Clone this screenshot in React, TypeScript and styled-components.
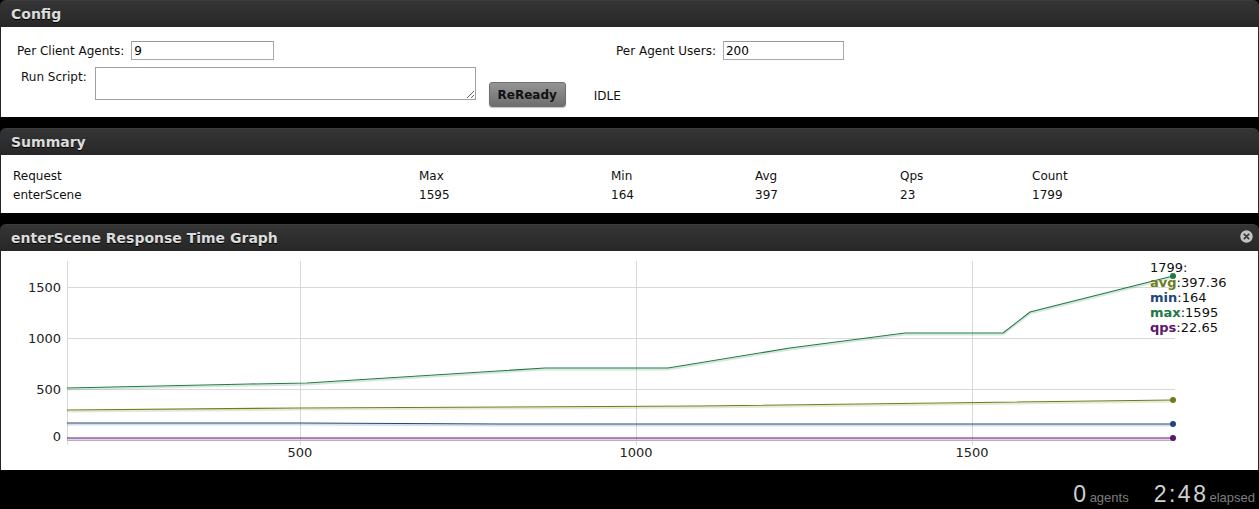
import React from "react";
import styled, { createGlobalStyle } from "styled-components";

const Global = createGlobalStyle`
  html, body { margin: 0; padding: 0; background: #000; }
  body { font-family: "DejaVu Sans", Verdana, sans-serif; font-size: 12px; color: #111; }
`;

const Page = styled.div`
  width: 1259px;
  height: 509px;
  display: flex;
  flex-direction: column;
  background: #000;
  overflow: hidden;
`;

const Panel = styled.section<{ $gap?: number }>`
  display: flex;
  flex-direction: column;
  margin-bottom: ${(p) => p.$gap ?? 11}px;
`;

const Header = styled.header`
  position: relative;
  height: 27px;
  display: flex;
  align-items: center;
  padding-left: 11px;
  border-radius: 6px 6px 0 0;
  background: linear-gradient(#343434, #272727);
  border-top: 1px solid #3c3c3c;
  box-sizing: border-box;
`;

const HeaderTitle = styled.h2`
  margin: 0;
  font-family: "DejaVu Sans", Verdana, sans-serif;
  font-weight: bold;
  font-size: 14px;
  color: #dcdcdc;
  text-shadow: 0 1px 0 #000;
`;

const CloseButton = styled.span`
  position: absolute;
  right: 6px;
  top: 5px;
  width: 13px;
  height: 13px;
  display: block;
`;

const Body = styled.div<{ $h: number }>`
  height: ${(p) => p.$h}px;
  background: #fff;
  border-left: 1px solid #262626;
  border-right: 1px solid #262626;
  box-sizing: border-box;
  position: relative;
`;

/* Config */
const ConfigBody = styled(Body)`
  display: flex;
  flex-direction: column;
  gap: 9px;
  padding-top: 14px;
`;

const Row = styled.div<{ $pl: number }>`
  display: flex;
  align-items: flex-start;
  padding-left: ${(p) => p.$pl}px;
`;

const Field = styled.label<{ $w?: number }>`
  display: flex;
  align-items: center;
  gap: 7px;
  width: ${(p) => (p.$w ? `${p.$w}px` : "auto")};
`;

const Label = styled.span`
  font-size: 12px;
  color: #111;
  white-space: nowrap;
`;

const TextInput = styled.input<{ $w: number }>`
  width: ${(p) => p.$w}px;
  height: 19px;
  box-sizing: border-box;
  border: 1px solid #a9a9a9;
  border-top-color: #999;
  padding: 0 2px;
  font-family: "DejaVu Sans", Verdana, sans-serif;
  font-size: 12px;
  color: #000;
  outline: none;
`;

const ScriptLabel = styled(Label)`
  margin-top: 1px;
  margin-right: 8px;
`;

const ScriptArea = styled.textarea`
  width: 381px;
  height: 33px;
  box-sizing: border-box;
  border: 1px solid #a0a0a0;
  resize: both;
  margin: -2px 0 0 0;
  font-family: "DejaVu Sans", Verdana, sans-serif;
  font-size: 12px;
  outline: none;
`;

const ReadyButton = styled.button`
  margin: 13px 0 0 13px;
  width: 77px;
  height: 25px;
  border-radius: 3px;
  border: 1px solid #6f6f6f;
  background: linear-gradient(#959595, #6e6e6e);
  box-shadow: 0 1px 1px rgba(0, 0, 0, 0.25);
  font-family: "DejaVu Sans", Verdana, sans-serif;
  font-weight: bold;
  font-size: 12px;
  color: #111;
  padding: 0;
`;

const Status = styled.span`
  margin: 20px 0 0 28px;
  font-size: 12px;
  color: #111;
`;

/* Summary */
const SummaryBody = styled(Body)`
  padding: 11px 0 0 12px;
`;

const SummaryGrid = styled.div`
  display: grid;
  grid-template-columns: 406px 192px 144px 145px 132px 1fr;
  grid-auto-rows: 19px;
  align-items: center;
`;

const Cell = styled.span`
  font-size: 12px;
  color: #111;
`;

/* Graph */
const GraphBody = styled(Body)`
  overflow: hidden;
`;

const Legend = styled.div`
  position: absolute;
  left: 1149px;
  top: 9px;
  display: flex;
  flex-direction: column;
  font-size: 13px;
  line-height: 15px;
  color: #111;
`;

const LegendKey = styled.b<{ $c: string }>`
  color: ${(p) => p.$c};
`;

/* Footer */
const Footer = styled.footer`
  flex: 1;
  display: flex;
  justify-content: flex-end;
  align-items: flex-start;
  padding: 13px 4px 0 0;
  margin-top: -11px;
  font-family: "Liberation Sans", Arial, sans-serif;
  line-height: 1;
`;

const Stat = styled.span<{ $ml?: number }>`
  margin-left: ${(p) => p.$ml ?? 0}px;
  display: flex;
  align-items: baseline;
`;

const Big = styled.span`
  font-size: 23px;
  color: #d0d0d0;
  letter-spacing: 2.5px;
`;

const Small = styled.span`
  font-size: 13px;
  color: #7d7d7d;
  margin-left: 1px;
`;

const COLORS = {
  avg: "#6e7d1a",
  min: "#22467e",
  max: "#1f7a45",
  qps: "#5b1670",
};

const maxPts: [number, number][] = [
  [67, 388], [250, 384], [307, 383], [545, 368], [668, 368], [790, 348],
  [905, 333], [1003, 333], [1030, 312], [1173, 276],
];
const avgPts: [number, number][] = [
  [67, 410], [300, 408], [700, 406], [1173, 400],
];
const minPts: [number, number][] = [
  [67, 423], [300, 423], [500, 424], [1173, 424],
];
const qpsPts: [number, number][] = [
  [67, 438], [1173, 438],
];

const pts = (a: [number, number][]) => a.map(([x, y]) => `${x},${y}`).join(" ");

const Series: React.FC<{ p: [number, number][]; c: string }> = ({ p, c }) => {
  const last = p[p.length - 1];
  return (
    <g>
      <polyline points={pts(p.map(([x, y]) => [x, y + 1.5] as [number, number]))} fill="none" stroke={c} strokeOpacity={0.18} strokeWidth={2} />
      <polyline points={pts(p)} fill="none" stroke={c} strokeWidth={1.1} />
      <circle cx={last[0]} cy={last[1]} r={3} fill={c} />
    </g>
  );
};

const Chart: React.FC = () => (
  <svg width={1257} height={219} viewBox="1 251 1257 219" style={{ display: "block" }}>
    <g stroke="#d9d9d9" strokeWidth={1}>
      {[287.5, 338.5, 389.5].map((y) => (
        <line key={y} x1={67} x2={1175} y1={y} y2={y} />
      ))}
      {[67.5, 300.5, 636.5, 972.5].map((x) => (
        <line key={x} x1={x} x2={x} y1={261} y2={445} />
      ))}
    </g>
    <line x1={67} x2={1175} y1={440.5} y2={440.5} stroke="#c9b9d0" strokeWidth={1} />
    <g fontFamily="DejaVu Sans, Verdana, sans-serif" fontSize={13} fill="#222">
      {[
        [1500, 292],
        [1000, 343],
        [500, 394],
        [0, 441],
      ].map(([v, y]) => (
        <text key={v} x={61} y={y} textAnchor="end">{v}</text>
      ))}
      {[
        [500, 300],
        [1000, 636],
        [1500, 972],
      ].map(([v, x]) => (
        <text key={v} x={x} y={457} textAnchor="middle">{v}</text>
      ))}
    </g>
    <Series p={qpsPts} c={COLORS.qps} />
    <Series p={minPts} c={COLORS.min} />
    <Series p={avgPts} c={COLORS.avg} />
    <Series p={maxPts} c={COLORS.max} />
  </svg>
);

const CloseIcon: React.FC = () => (
  <svg width={13} height={13} viewBox="0 0 13 13">
    <circle cx={6.5} cy={6.5} r={6.2} fill="#c4c4c4" />
    <path d="M4.3 4.3 L8.7 8.7 M8.7 4.3 L4.3 8.7" stroke="#3a3a3a" strokeWidth={1.8} strokeLinecap="round" />
  </svg>
);

const summary = [
  ["Request", "Max", "Min", "Avg", "Qps", "Count"],
  ["enterScene", "1595", "164", "397", "23", "1799"],
];

export default function App() {
  return (
    <Page>
      <Global />
      <Panel>
        <Header>
          <HeaderTitle>Config</HeaderTitle>
        </Header>
        <ConfigBody $h={90}>
          <Row $pl={16}>
            <Field $w={599}>
              <Label>Per Client Agents:</Label>
              <TextInput $w={143} defaultValue="9" />
            </Field>
            <Field>
              <Label>Per Agent Users:</Label>
              <TextInput $w={121} defaultValue="200" />
            </Field>
          </Row>
          <Row $pl={20}>
            <ScriptLabel>Run Script:</ScriptLabel>
            <ScriptArea />
            <ReadyButton>ReReady</ReadyButton>
            <Status>IDLE</Status>
          </Row>
        </ConfigBody>
      </Panel>

      <Panel>
        <Header>
          <HeaderTitle>Summary</HeaderTitle>
        </Header>
        <SummaryBody $h={58}>
          <SummaryGrid>
            {summary.flat().map((t, i) => (
              <Cell key={i}>{t}</Cell>
            ))}
          </SummaryGrid>
        </SummaryBody>
      </Panel>

      <Panel>
        <Header>
          <HeaderTitle>enterScene Response Time Graph</HeaderTitle>
          <CloseButton>
            <CloseIcon />
          </CloseButton>
        </Header>
        <GraphBody $h={219}>
          <Chart />
          <Legend>
            <span>1799:</span>
            <span><LegendKey $c={COLORS.avg}>avg</LegendKey>:397.36</span>
            <span><LegendKey $c={COLORS.min}>min</LegendKey>:164</span>
            <span><LegendKey $c={COLORS.max}>max</LegendKey>:1595</span>
            <span><LegendKey $c={COLORS.qps}>qps</LegendKey>:22.65</span>
          </Legend>
        </GraphBody>
      </Panel>

      <Footer>
        <Stat>
          <Big>0</Big>
          <Small>agents</Small>
        </Stat>
        <Stat $ml={25}>
          <Big>2:48</Big>
          <Small>elapsed</Small>
        </Stat>
      </Footer>
    </Page>
  );
}
